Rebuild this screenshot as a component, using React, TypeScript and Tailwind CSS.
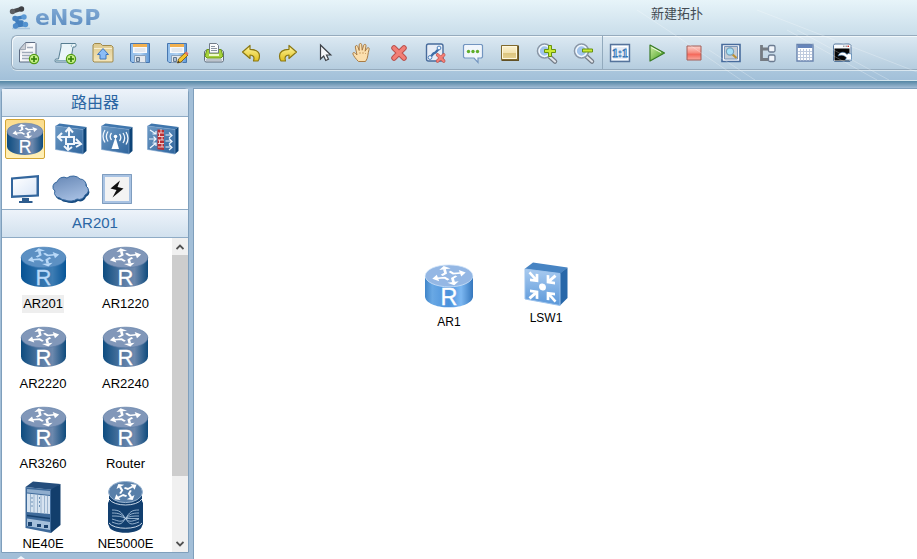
import { useState } from 'react';
import type { ReactNode } from 'react';

function Defs() {
  return (
    <svg className="absolute h-0 w-0" aria-hidden="true">
      <defs>
        <linearGradient id="paper" x1="0" y1="0" x2="1" y2="1">
          <stop offset="0" stopColor="#b9bec7" />
          <stop offset="0.4" stopColor="#fdfdfe" />
          <stop offset="1" stopColor="#dfe5ee" />
        </linearGradient>
        <linearGradient id="folder" x1="0" y1="0" x2="0" y2="1">
          <stop offset="0" stopColor="#dcc88c" />
          <stop offset="1" stopColor="#f4e6bb" />
        </linearGradient>
        <linearGradient id="disk" x1="0" y1="0" x2="1" y2="0">
          <stop offset="0" stopColor="#8dbbe9" />
          <stop offset="0.5" stopColor="#b5d4f3" />
          <stop offset="1" stopColor="#5f98d6" />
        </linearGradient>
        <linearGradient id="gold" x1="0" y1="0" x2="0" y2="1">
          <stop offset="0" stopColor="#fff6a0" />
          <stop offset="1" stopColor="#e0c01c" />
        </linearGradient>
        <linearGradient id="green" x1="0" y1="0" x2="1" y2="1">
          <stop offset="0" stopColor="#d3efa8" />
          <stop offset="1" stopColor="#3a9a14" />
        </linearGradient>
        <linearGradient id="stop" x1="0" y1="0" x2="0" y2="1">
          <stop offset="0" stopColor="#fbd2cc" />
          <stop offset="0.45" stopColor="#f79285" />
          <stop offset="0.6" stopColor="#f46a5c" />
          <stop offset="1" stopColor="#f9a99e" />
        </linearGradient>
        <linearGradient id="sand" x1="0" y1="0" x2="0" y2="1">
          <stop offset="0" stopColor="#fcf3d2" />
          <stop offset="0.5" stopColor="#f3e3b0" />
          <stop offset="0.52" stopColor="#dcc47c" />
          <stop offset="1" stopColor="#e6d394" />
        </linearGradient>
        <linearGradient id="side" x1="0" y1="0" x2="1" y2="0">
          <stop offset="0" stopColor="#0d4c80" />
          <stop offset="0.5" stopColor="#5f80a8" />
          <stop offset="0.7" stopColor="#6c88ad" />
          <stop offset="1" stopColor="#0f4b7d" />
        </linearGradient>
        <linearGradient id="side-picked" x1="0" y1="0" x2="1" y2="0">
          <stop offset="0" stopColor="#075394" />
          <stop offset="0.5" stopColor="#3475ae" />
          <stop offset="0.7" stopColor="#3d7cb3" />
          <stop offset="1" stopColor="#075598" />
        </linearGradient>
        <linearGradient id="side-bright" x1="0" y1="0" x2="1" y2="0">
          <stop offset="0" stopColor="#3f85c9" />
          <stop offset="0.15" stopColor="#69a8e4" />
          <stop offset="0.5" stopColor="#4a91dc" />
          <stop offset="0.75" stopColor="#7db8f2" />
          <stop offset="1" stopColor="#3577bd" />
        </linearGradient>
        <linearGradient id="face" x1="0" y1="0" x2="1" y2="1">
          <stop offset="0" stopColor="#6d9ac5" />
          <stop offset="1" stopColor="#2f659d" />
        </linearGradient>
        <linearGradient id="face-bright" x1="0" y1="0" x2="0" y2="1">
          <stop offset="0" stopColor="#a9cbf0" />
          <stop offset="1" stopColor="#5a97d9" />
        </linearGradient>
        <linearGradient id="cloud" x1="0" y1="0" x2="0.4" y2="1">
          <stop offset="0" stopColor="#6687b5" />
          <stop offset="1" stopColor="#a3bce0" />
        </linearGradient>
        <linearGradient id="screen" x1="0" y1="0" x2="1" y2="1">
          <stop offset="0" stopColor="#ffffff" />
          <stop offset="1" stopColor="#d9e6f7" />
        </linearGradient>
      </defs>
    </svg>
  );
}

function PlusBadge() {
  return (
    <g>
      <circle cx="17" cy="18" r="4.6" fill="#c6ef86" stroke="#4f9a12" strokeWidth="1.2" />
      <path d="M17 15v6M14 18h6" stroke="#2f7d06" strokeWidth="1.6" />
    </g>
  );
}

function Floppy() {
  return (
    <g>
      <path d="M2.5 2.5h19v19H4L2.5 20z" fill="url(#disk)" stroke="#4676b0" />
      <path d="M5 3h14v9H5z" fill="#f7f9fc" />
      <path d="M5 3h14v3H5z" fill="#f2b04f" />
      <path d="M6.5 8h11M6.5 10h11" stroke="#cfd6e0" />
      <path d="M6.5 14.5h11v7h-11z" fill="#e3e8ee" stroke="#8aa2bd" />
      <path d="M8.5 16.5h3v4h-3z" fill="#b3c1d0" stroke="#62788f" />
    </g>
  );
}

function RedCross() {
  return (
    <g strokeLinecap="round">
      <path d="M7 7l10 10M17 7L7 17" stroke="#b9504c" strokeWidth="5.5" />
      <path d="M7 7l10 10M17 7L7 17" stroke="#f27f76" strokeWidth="3.6" />
    </g>
  );
}

function Magnifier({ minus = false }: { minus?: boolean }) {
  return (
    <g>
      <path d="M14 15l6 5.5" stroke="#737b86" strokeWidth="4.5" strokeLinecap="round" />
      <path d="M14.5 15.5l5.5 5" stroke="#e1e5ea" strokeWidth="2.2" strokeLinecap="round" />
      <circle cx="9.5" cy="10" r="7" fill="#b5d1ef" stroke="#8b97a6" strokeWidth="1.6" />
      <circle cx="9.5" cy="10" r="5.4" fill="#a1c4ec" stroke="#f4f8fc" strokeWidth="1.5" />
      <path
        d={minus ? 'M10.5 8h10v3h-10z' : 'M13.5 4.5h3v4h4v3h-4v4h-3v-4h-4v-3h4z'}
        fill="#cbea35"
        stroke="#67930e"
      />
    </g>
  );
}

function BentArrow() {
  return (
    <path
      d="M3.5 11L11 4.500v3.800c6 .2 9.500 2.500 9.500 6.700 0 2-.6 3.800-1.500 5h-4.500c1.200-3.800.2-5.800-3.500-6v3.500z"
      fill="url(#gold)"
      stroke="#8b7814"
      strokeWidth="1.2"
      strokeLinejoin="round"
    />
  );
}

const editTools: { name: string; art: ReactNode }[] = [
  {
    name: 'New topology',
    art: (
      <g>
        <path d="M8.5 1.5H18l1 1V21H2.5V8.5z" fill="url(#paper)" stroke="#5d6c83" />
        <path d="M8.5 1.5v7h-6z" fill="#c9cdd4" stroke="#8a93a2" strokeWidth="0.7" />
        <path d="M10 6.5h6M5 11.5h11M5 14.5h8M5 17.5h7" stroke="#9fa9b8" strokeWidth="1.3" />
        <PlusBadge />
      </g>
    ),
  },
  {
    name: 'New script',
    art: (
      <g>
        <path d="M7 2.5h14.500c1 1.500.5 3.500-.5 3.500h-2l-2.500 15h-15c-.8-1-.5-3 .5-3h2.500L7 6z" fill="#eaf5f9" stroke="#567d91" />
        <path d="M18 3.500c-1 1-1 2 0 2.500M2 19.500h11" stroke="#88adbc" fill="none" />
        <PlusBadge />
      </g>
    ),
  },
  {
    name: 'Open',
    art: (
      <g>
        <path d="M3.5 2.5h6l2 2h9L22 6v14.500l-1 .5H3l-1-1V4z" fill="url(#folder)" stroke="#a08a4d" />
        <path d="M3 7.5h18" stroke="#f9efcf" />
        <path d="M12 7.5l5.500 6H15V18H9v-4.500H6.500z" fill="#8bbcf6" stroke="#3d74bd" />
      </g>
    ),
  },
  { name: 'Save', art: <Floppy /> },
  {
    name: 'Save as',
    art: (
      <g>
        <Floppy />
        <path d="M12.5 22l1-4 7-6.500L23 14l-7 7z" fill="#f4c42c" stroke="#805c10" strokeWidth="0.9" />
        <path d="M19.5 12l2-1.500 2 2-1.500 2z" fill="#df7366" />
        <path d="M12.5 22l.8-2.300 1.700 1.600z" fill="#333" />
      </g>
    ),
  },
  {
    name: 'Print',
    art: (
      <g>
        <path d="M2.5 10.5l2-1.500h15l2 1.500v9l-1 1.500h-17l-1-1.500z" fill="#e6e9ee" stroke="#5f6c7d" />
        <path d="M5 8.5h14l2 6.500-2 2H5l-2-2z" fill="#a6d13c" stroke="#6a9914" />
        <path d="M7.5 2.5h7l2 2V12h-9z" fill="#fafbfc" stroke="#727c88" />
        <path d="M9 5.5h4M9 7.5h6M9 9.5h6" stroke="#8b95a1" />
        <path d="M7 14h10" stroke="#eef9cd" strokeWidth="2" />
        <path d="M4 19h16" stroke="#aeb6c2" strokeWidth="1.5" />
      </g>
    ),
  },
  { name: 'Undo', art: <BentArrow /> },
  { name: 'Redo', art: <g transform="translate(24 0) scale(-1 1)"><BentArrow /></g> },
  {
    name: 'Select',
    art: <path d="M7.5 4v14l3.200-3 2 4.500 2.800-1.300-2-4.200h4.300z" fill="#f5f6f8" stroke="#3e4248" strokeWidth="1.2" />,
  },
  {
    name: 'Pan',
    art: (
      <g>
        <path
          d="M8.5 20.5C6 18 3.500 15 2.800 12.700c0-1.500 1.700-1.500 2.700-.2L7 14 5.300 6c0-1.800 2-2 2.500-.5l1.400 4V3.700c.2-1.600 2.300-1.600 2.500 0l.5 5.500 1.500-5c.6-1.500 2.400-1 2.300.5l-.9 5.500 2-3c1-1.200 2.500-.3 2 1.200-1.600 4.500-.8 8.600-3.600 12.100z"
          fill="#fbdfae"
          stroke="#a87c46"
        />
        <path d="M10 11v2M13 11v2M15.5 12v1" stroke="#d1a56b" />
      </g>
    ),
  },
  { name: 'Delete', art: <RedCross /> },
  {
    name: 'Delete link',
    art: (
      <g>
        <rect x="2.5" y="3" width="16.5" height="17" rx="2" fill="#e7edf6" stroke="#486c9c" strokeWidth="1.4" />
        <path d="M6 16.5l3.500-4 2-1 4-4.500" fill="none" stroke="#3f6ea7" strokeWidth="2.4" />
        <circle cx="6" cy="16.5" r="1.9" fill="#f3f8ff" stroke="#4d7fb9" />
        <circle cx="15" cy="7" r="1.9" fill="#f3f8ff" stroke="#4d7fb9" />
        <g transform="translate(9.2 9.5) scale(.62)"><RedCross /></g>
      </g>
    ),
  },
  {
    name: 'Text',
    art: (
      <g>
        <path d="M3.5 3.5h17l1 1V16l-1 1H17v4.500L13 17H3.500l-1-1V4.500z" fill="#f1f6fc" stroke="#7295c0" strokeWidth="1.2" />
        <circle cx="7.5" cy="10.5" r="1.7" fill="#60ae2c" />
        <circle cx="12" cy="10.5" r="1.7" fill="#60ae2c" />
        <circle cx="16.5" cy="10.5" r="1.7" fill="#60ae2c" />
      </g>
    ),
  },
  {
    name: 'Palette',
    art: (
      <g>
        <path d="M3.5 4.5H21V20H3.500z" fill="#615126" />
        <path d="M3.5 4.5h16v14h-16z" fill="url(#sand)" stroke="#80692d" />
        <path d="M4.5 5.5h14v12h-14z" fill="none" stroke="#fff8dd" />
      </g>
    ),
  },
  { name: 'Zoom in', art: <Magnifier /> },
  { name: 'Zoom out', art: <Magnifier minus /> },
];

const runTools: { name: string; art: ReactNode }[] = [
  {
    name: 'Actual size',
    art: (
      <g>
        <path d="M2.5 3.5h19v17h-19z" fill="#e4ecf6" stroke="#55739b" strokeWidth="1.4" />
        <path d="M4.5 5.5h15v13h-15z" fill="none" stroke="#fff" />
        <text x="12" y="16" textAnchor="middle" fontFamily="Liberation Serif, serif" fontSize="12" fontWeight="700" fill="#e8f5ff" stroke="#2f73b5" strokeWidth="0.9">
          1:1
        </text>
      </g>
    ),
  },
  {
    name: 'Start',
    art: (
      <g>
        <path d="M5 4l14.500 8L5 20z" fill="url(#green)" stroke="#397b26" strokeWidth="1.2" strokeLinejoin="round" />
        <path d="M6.5 6.5l9.500 5" stroke="#effbe0" />
      </g>
    ),
  },
  { name: 'Stop', art: <path d="M5 5h14v14H5z" fill="url(#stop)" stroke="#a35c57" /> },
  {
    name: 'Capture packets',
    art: (
      <g>
        <path d="M3 3.5h18v17H3z" fill="#f7f9fc" stroke="#476b9c" strokeWidth="1.6" />
        <path d="M5.5 5.5h13V18h-13z" fill="#c6cdd5" stroke="#7995b9" />
        <path d="M13 13l4.500 4" stroke="#bb9136" strokeWidth="2.2" />
        <circle cx="11" cy="10.5" r="3.6" fill="#a5dff7" stroke="#78a1bb" strokeWidth="1.2" />
      </g>
    ),
  },
  {
    name: 'Show interfaces',
    art: (
      <g>
        <path d="M5.5 4v14.500H14M5.5 8H14" fill="none" stroke="#757b82" strokeWidth="2.8" />
        <rect x="12.5" y="4.5" width="6.5" height="6.5" rx="1.5" fill="#f1f5fa" stroke="#6b7b91" strokeWidth="1.3" />
        <rect x="12.5" y="14" width="6.5" height="6.5" rx="1.5" fill="#f1f5fa" stroke="#6b7b91" strokeWidth="1.3" />
      </g>
    ),
  },
  {
    name: 'Show grid',
    art: (
      <g>
        <path d="M4 3.5h16V20H4z" fill="#fff" stroke="#6883ae" strokeWidth="1.4" />
        <path d="M4.5 4h15v3h-15z" fill="#6685ba" />
        <path d="M7.5 8v11.500M10.5 8v11.500M13.5 8v11.500M16.5 8v11.500M5 10.5h14M5 13.5h14M5 16.5h14" stroke="#bfcbde" />
      </g>
    ),
  },
  {
    name: 'Open consoles',
    art: (
      <g>
        <path d="M4.5 3h15L21 4.500v15l-1 1H4.500l-1-1v-15z" fill="#f7fafd" stroke="#55779d" />
        <path d="M4.5 7.5h15v12h-15z" fill="#050505" />
        <path d="M13 5.2h1.500M15.5 5.2H17" stroke="#777" />
        <path d="M17.5 5.2H19" stroke="#cc2d2a" strokeWidth="1.4" />
        <path d="M8 15c1.500-4.500 6.500-5 9-1.500l1.200-1.200L21.500 13v6h-6.500l1.500-2.200c-1.800-2.600-4.800-3.300-8.500-1.800z" fill="#fff" stroke="#3972a8" strokeWidth="0.6" />
      </g>
    ),
  },
];

function ToolButton({ name, art }: { name: string; art: ReactNode }) {
  return (
    <button type="button" title={name} aria-label={name} className="flex h-8 w-[33px] shrink-0 items-center justify-center">
      <svg viewBox="0 0 24 24" className="size-6" fill="none">{art}</svg>
    </button>
  );
}

type Tone = 'normal' | 'picked' | 'bright';

const tones = {
  normal: { side: 'url(#side)', top: '#8197b9', rim: '#5b7ba5', ink: '#ffffff' },
  picked: { side: 'url(#side-picked)', top: '#5c90c3', rim: '#3b79b3', ink: '#b9d9f8' },
  bright: { side: 'url(#side-bright)', top: '#94b7e4', rim: '#d3e5fa', ink: '#ffffff' },
};

// four bent arrows turning round the centre, flattened to lie on the lid
function LidArrows({ ink }: { ink: string }) {
  return (
    <g fill="none" stroke={ink} strokeWidth="2.4">
      {[33, 123, 213, 303].map((angle) => (
        <g key={angle} transform={`rotate(${angle})`}>
          <path d="M-3-5.500L1.500-4.500 6-8.500" />
          <path d="M2.500-11.500h7v7z" fill={ink} stroke="none" />
        </g>
      ))}
    </g>
  );
}

function RouterIcon({ tone = 'normal', className }: { tone?: Tone; className: string }) {
  const c = tones[tone];
  return (
    <svg viewBox="0 0 45 40" className={`overflow-visible ${className}`} aria-hidden="true">
      <path d="M0 10.500v19C0 35.500 10 40 22.500 40S45 35.500 45 29.500v-19z" fill={c.side} />
      <ellipse cx="22.5" cy="10.5" rx="22.3" ry="10.3" fill={c.top} stroke={c.rim} strokeWidth="0.7" />
      <g transform="translate(22.5 10.3) scale(1.1 .64)"><LidArrows ink={c.ink} /></g>
      <text x="22.5" y="38" textAnchor="middle" fontFamily="Liberation Sans, Arial, sans-serif" fontSize="22" fill={c.ink} stroke={c.ink} strokeWidth="0.3">
        R
      </text>
    </svg>
  );
}

function Slab({ children }: { children: ReactNode }) {
  return (
    <svg viewBox="0 0 32 32" className="size-8" fill="none" aria-hidden="true">
      <path d="M.5 3l4-2.500L31.500 4 28 6.500z" fill="#3f76ad" />
      <path d="M28 6.5L31.500 4v24L28 31z" fill="#0d4478" />
      <path d="M.5 3L28 6.500V31L.5 26.500z" fill="url(#face)" stroke="#7fa5ce" strokeWidth="0.6" />
      {children}
    </svg>
  );
}

function ChassisIcon() {
  return (
    <svg viewBox="0 0 36 52" className="h-[52px] w-9" fill="none" aria-hidden="true">
      <path d="M.5 6L8 .5 35.500 3 28 9z" fill="#244d7c" />
      <path d="M26 8.5L35.500 3v41L26 52z" fill="#123e6c" />
      <path d="M.5 6L26 8.500V52L.5 47z" fill="#3e6a9a" />
      <path d="M2 8l23 2v4L2 11.500z" fill="#8fadcd" />
      <path d="M2 12.5L25 15v18L2 31z" fill="#d6e3f0" />
      <path d="M5.5 13v18M9 13.500v18M12.5 14v18M16 14v18M19.500 14.500v18M22.500 15v18" stroke="#9bb4ce" />
      <path d="M7 16v10M14.5 16v12" stroke="#6f92b7" strokeDasharray="2 2" />
      <path d="M2 34.5l23 3" stroke="#16406d" strokeWidth="1.5" />
      <path d="M2 37.5l23 3.500v8L2 45z" fill="#a4bfda" />
      <path d="M3 41h4v4H3zM12 43h4v3h-4zM19 44h4v3h-4z" fill="#1b426e" />
    </svg>
  );
}

function CoreRouterIcon() {
  return (
    <svg viewBox="0 0 35 52" className="h-[52px] w-[35px]" fill="none" aria-hidden="true">
      <path d="M1 11v9l-1 2v21l1 2c1 9 32 9 33 0l1-2V22l-1-2v-9z" fill="#123f6f" />
      <path d="M1 18c5 8 28 8 33 0M1 42c5 7 28 7 33 0" stroke="#dbe7f3" strokeWidth="0.9" />
      <ellipse cx="17.5" cy="11" rx="17" ry="10.6" fill="#587fa9" stroke="#98b3d0" />
      <g transform="translate(17.5 11) rotate(-20) scale(.9 .7)"><LidArrows ink="#ffffff" /></g>
      <g stroke="#b5cde5" strokeWidth="0.8">
        <path d="M4 29c8 0 9 2 13.500 8.500S23 44 31 41M31 29c-8 0-9 2-13.500 8.500S12 44 4 41" />
        <path d="M4 32c7 0 9 1 13.500 5.500S24 40 31 38M31 32c-7 0-9 1-13.500 5.500S11 40 4 38" />
        <path d="M4 35c6 0 9 0 13.500 2.500h13.500M31 35c-6 0-9 0-13.500 2.500" />
      </g>
    </svg>
  );
}

function SwitchIcon() {
  return (
    <svg viewBox="0 0 44 44" className="size-11" fill="none" aria-hidden="true">
      <path d="M.5 7L9 .5 43.500 5.500 36 12z" fill="#4784c3" />
      <path d="M36 11.5l7.500-6V36L36 43.500z" fill="#2767a9" />
      <path d="M1 7l35 4.500v32L1 37z" fill="url(#face-bright)" stroke="#9dc3ec" />
      <g transform="translate(18.5 25) skewY(7)" stroke="#fff" strokeWidth="2.7">
        {[0, 90, 180, 270].map((angle) => (
          <path key={angle} d="M13-13L5.500-5.500M5.500-12.500v7h7" transform={`rotate(${angle})`} />
        ))}
        <circle r="2.9" fill="#fff" strokeWidth="1" />
      </g>
    </svg>
  );
}

const cloudPath =
  'M8 25a6 5 0 0 1-5-7 5 5 0 0 1 2-9 7 7 0 0 1 10-4 9 8 0 0 1 13 1 6 6 0 0 1 6 7 5 5 0 0 1-1 9 6 6 0 0 1-8 4 9 6 0 0 1-12 1 6 6 0 0 1-5-2z';

const categories: { name: string; art: ReactNode }[] = [
  { name: '路由器', art: <RouterIcon className="h-8 w-9" /> },
  {
    name: '交换机',
    art: (
      <Slab>
        <path
          d="M11 14h8v7h-8zM14 14V6M10.500 9L14 5l4 4.500M11 14H4M7 10l-4 4 4 4M19 20h6M21 16l5 5-5 3M13 21v5M9 23l4 4 4-3"
          stroke="#f1f6fc"
          strokeWidth="2"
        />
      </Slab>
    ),
  },
  {
    name: '无线局域网',
    art: (
      <Slab>
        <path d="M14.5 14L18 26h-7.500z" fill="#fff" />
        <circle cx="14.5" cy="13.5" r="1.8" fill="#fff" />
        <path
          d="M10.5 10c-1.500 2-1.500 5 0 7M7 8.500c-2 3-2 7 0 10M4 7c-2.500 4-2.500 8.500 0 12.500M18.500 11c1.500 2 1.500 5 0 7M22 10c2 3 2 7 0 10M25 9c2.500 4 2.500 8.500 0 12.500"
          stroke="#f1f6fc"
          strokeWidth="1.3"
        />
      </Slab>
    ),
  },
  {
    name: '防火墙',
    art: (
      <Slab>
        <path d="M10.5 6.5l6.500.5v20l-6.500-.8z" fill="#b92f33" />
        <path
          d="M11 10h6M11 13.500h6M11 17h6M11 20.500h6M11 24h6M14 6v4M12.500 10v4M15 14v3M12.500 17v4M15 21v3"
          stroke="#f3dada"
          strokeWidth="0.9"
        />
        <path
          d="M3 7l6 4M9 8v3H5.500M2 16h7M6.500 13.500L9 16l-2.500 2.500M3 25l6-5M5.500 20H9v3M18.500 12h6M22 9.500l3 3-3 2.500M18.500 18h6M22 15.500l3 3-3 2.500M18.500 24h6M22 21.500l3 3-3 2.500"
          stroke="#eef5fd"
          strokeWidth="1.2"
        />
      </Slab>
    ),
  },
  {
    name: '终端',
    art: (
      <svg viewBox="0 0 30 30" className="size-[30px]" fill="none" aria-hidden="true">
        <path d="M1 3.5L29 1v21.500L1 24z" fill="#33669d" />
        <path d="M3 5.5l23.500-2v17L3 21.500z" fill="url(#screen)" />
        <path d="M12 24h7v3h3.500v2H9v-2h3z" fill="#2d5c8e" />
      </svg>
    ),
  },
  {
    name: '其它设备',
    art: (
      <svg viewBox="0 0 38 32" className="h-8 w-[38px]" fill="none" aria-hidden="true">
        <path d={cloudPath} fill="#164b80" transform="translate(1 2)" />
        <path d={cloudPath} fill="url(#cloud)" stroke="#37689e" />
      </svg>
    ),
  },
  {
    name: '设备连线',
    art: (
      <svg viewBox="0 0 30 30" className="size-[30px]" fill="none" aria-hidden="true">
        <path d="M1.5 1.5h27v27h-27z" fill="#f3f3f3" stroke="#a9c3e3" strokeWidth="3" />
        <path d="M.5.5h29v29H.5z" stroke="#7f9dbf" />
        <path d="M18 6.5l-9.500 8 6 1.500-4 7.500 11-9-6-1.500z" fill="#111" />
      </svg>
    ),
  },
];

const models = ['AR201', 'AR1220', 'AR2220', 'AR2240', 'AR3260', 'Router', 'NE40E', 'NE5000E'];

function ModelArt({ name, picked }: { name: string; picked: boolean }) {
  if (name === 'NE40E') return <ChassisIcon />;
  if (name === 'NE5000E') return <CoreRouterIcon />;
  return <RouterIcon tone={picked ? 'picked' : 'normal'} className="h-10 w-[45px]" />;
}

function PanelTitle({ children }: { children: ReactNode }) {
  return (
    <h2 className="flex h-7 shrink-0 items-center justify-center border-b border-[#8fabc5] bg-linear-to-b from-[#edf3fa] to-[#d2e1ee] text-[#2b66a3]">
      {children}
    </h2>
  );
}

export default function App() {
  const [category, setCategory] = useState('路由器');
  const [model, setModel] = useState('AR201');

  return (
    <div className="flex h-screen flex-col overflow-hidden bg-[#a3bfd8] font-['Liberation_Sans','Noto_Sans_CJK_SC',sans-serif] text-black">
      <Defs />

      <header className="relative h-[81px] shrink-0 border-b border-[#d3e6ee] bg-linear-to-b from-[#e7f4f9] via-[#c5dae8] to-[#a2c0d9]">
        <div className="flex h-[35px] items-center">
          <div className="flex flex-1 items-center gap-1 pl-[9px]">
            <svg viewBox="0 0 22 24" className="h-6 w-[22px]" fill="none" aria-hidden="true">
              <path d="M3 22.5h18" stroke="#a9c6de" strokeWidth="1.5" />
              <path d="M3.5 5.5L12 3" stroke="#47494d" strokeWidth="4" strokeLinecap="round" />
              <circle cx="3.5" cy="5.5" r="2.7" fill="#5d6064" />
              <circle cx="12.5" cy="3" r="2.7" fill="#3f4145" />
              <path d="M15 11L6 12.500l3 3.500-2.500 4 10-1.500M9 16h4" stroke="#3f7dbd" strokeWidth="3.6" strokeLinecap="round" strokeLinejoin="round" />
              <circle cx="15" cy="11" r="2.7" fill="#5b9ad6" />
              <circle cx="6" cy="12.5" r="2.7" fill="#4681bf" />
              <circle cx="6.5" cy="20" r="2.7" fill="#4d8ac9" />
              <circle cx="16.5" cy="18.5" r="2.7" fill="#5494d1" />
            </svg>
            <span className="bg-linear-to-b from-[#8cb2da] to-[#4f83ba] bg-clip-text font-['DejaVu_Sans',sans-serif] text-[22px] leading-8 font-bold text-transparent">
              eNSP
            </span>
          </div>
          <h1 className="mr-[214px] mb-[7px] text-[13px] leading-5 text-[#434b53]">新建拓扑</h1>
        </div>

        <div className="ml-[11px] flex h-[35px] items-center overflow-hidden rounded-l-md border-y border-l border-[#96abbd] bg-linear-to-b from-[#dce9f2] to-[#b5cddf] shadow-[inset_1px_1px_0_#f2f8fb,0_1px_0_#d8e6ef]">
          <div className="flex gap-1">
            {editTools.map((tool) => <ToolButton key={tool.name} {...tool} />)}
          </div>
          <div className="ml-0.5 flex h-full items-center gap-1 border-l border-[#92aabd]">
            {runTools.map((tool) => <ToolButton key={tool.name} {...tool} />)}
          </div>
        </div>

        <svg className="pointer-events-none absolute top-0 right-0 h-20 w-[320px]" viewBox="0 0 320 80" aria-hidden="true">
          <path d="M40 10L78 35 144 80M112 50L158 80M190 30L280 80M200 30L292 80M160 10L320 72" stroke="#fff" strokeOpacity="0.25" fill="none" />
        </svg>
      </header>
      <div className="h-[7px] shrink-0 bg-linear-to-b from-[#5386a4] to-[#a2bdd6]" />

      <div className="flex min-h-0 flex-1 gap-1">
        <aside className="flex w-[189px] shrink-0 flex-col pl-px">
          <div className="flex min-h-0 flex-1 flex-col rounded-t-sm border border-[#7f9fbc] bg-white">
            <PanelTitle><span className="text-base">路由器</span></PanelTitle>
            <div className="grid shrink-0 grid-cols-[repeat(4,40px)] gap-x-1.5 gap-y-2.5 border-b border-[#8fabc5] px-[3px] pt-0.5">
              {categories.map(({ name, art }) => (
                <button
                  key={name}
                  type="button"
                  title={name}
                  aria-label={name}
                  onClick={() => setCategory(name)}
                  className={
                    category === name
                      ? 'flex size-10 items-center justify-center rounded-xs border border-[#d3a534] bg-linear-to-b from-[#fbdc8c] to-[#fff0b8]'
                      : 'flex size-10 items-center justify-center'
                  }
                >
                  {art}
                </button>
              ))}
            </div>
            <PanelTitle><span className="text-[15px]">{model}</span></PanelTitle>
            <div className="flex min-h-0 flex-1">
              <div className="grid flex-1 auto-rows-[80px] grid-cols-[82px_83px] overflow-hidden">
                {models.map((name) => (
                  <button key={name} type="button" onClick={() => setModel(name)} className="flex flex-col items-center pt-px">
                    <span className="flex h-14 items-center">
                      <ModelArt name={name} picked={model === name} />
                    </span>
                    <span className={model === name ? 'bg-[#eeeeee] px-px text-[13px] leading-[18px]' : 'px-px text-[13px] leading-[18px]'}>
                      {name}
                    </span>
                  </button>
                ))}
              </div>
              <div className="flex w-4 flex-col bg-[#f0f0f0] text-[#505050]">
                <button type="button" aria-label="Scroll up" className="flex h-[17px] shrink-0 items-center justify-center">
                  <svg viewBox="0 0 8 6" className="h-1.5 w-2" fill="none"><path d="M.5 5L4 1.500 7.500 5" stroke="currentColor" strokeWidth="1.8" /></svg>
                </button>
                <div className="flex-1">
                  <div className="h-[79%] bg-[#cdcdcd]" />
                </div>
                <button type="button" aria-label="Scroll down" className="flex h-[17px] shrink-0 items-center justify-center">
                  <svg viewBox="0 0 8 6" className="h-1.5 w-2" fill="none"><path d="M.5 1L4 4.500 7.500 1" stroke="currentColor" strokeWidth="1.8" /></svg>
                </button>
              </div>
            </div>
          </div>
          <div className="flex h-1.5 shrink-0 items-end pl-4">
            <svg viewBox="0 0 8 3" className="h-[3px] w-2" aria-hidden="true"><path d="M0 3l4-3 4 3z" fill="#edf4fa" /></svg>
          </div>
        </aside>

        <main className="relative flex-1 border-t border-l border-[#7f9fbc] bg-white text-xs">
          <figure className="absolute top-[175px] left-[231px] flex flex-col items-center">
            <RouterIcon tone="bright" className="h-[44px] w-12" />
            <figcaption className="mt-1.5 leading-4">AR1</figcaption>
          </figure>
          <figure className="absolute top-[173px] left-[330px] flex flex-col items-center">
            <SwitchIcon />
            <figcaption className="mt-1 leading-4">LSW1</figcaption>
          </figure>
        </main>
      </div>
    </div>
  );
}
